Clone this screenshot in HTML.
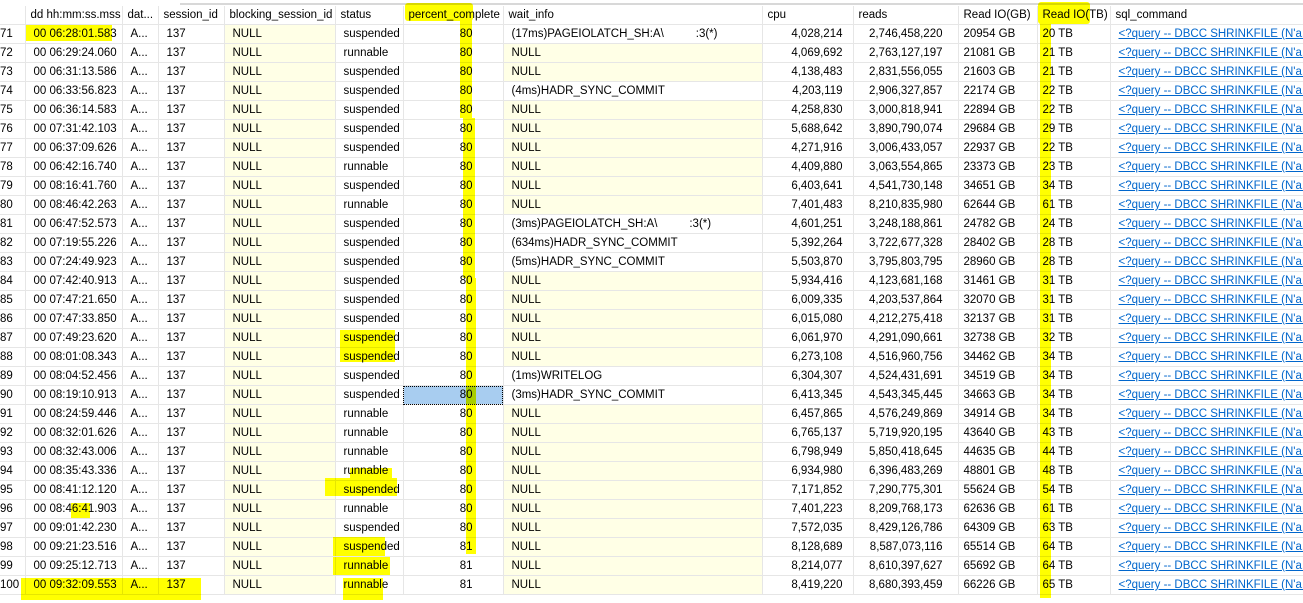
<!DOCTYPE html>
<html><head><meta charset="utf-8"><style>
body{margin:0;width:1303px;height:603px;overflow:hidden;background:#fff;font-family:"Liberation Sans",Arial,sans-serif;font-size:11.5px;color:#000;position:relative}
.top{position:absolute;left:180px;top:3px;width:1123px;height:2px;background:#d8d8d8}
table{position:absolute;left:0;top:6px;border-collapse:collapse;table-layout:fixed;width:1303px}
td{height:18px;padding:0 4px 0 8px;border-right:1px solid #e6e6e6;border-bottom:1px solid #e6e6e6;white-space:nowrap;overflow:hidden;line-height:18px}
tr.h td{padding-left:5px}
td.n{padding:0}
td.r{text-align:right;padding-right:10px}
td.p{padding-right:30px}
td.rd{padding-right:15px}
td.g{padding-left:5px}
td.y{background:#ffffe6}
td.l a{color:#0066cc;text-decoration:underline}
td.sel{background:#a8cdf0;outline:1px dotted #000;outline-offset:-1px}
.hl{position:absolute;background:#ffff00;mix-blend-mode:multiply}
</style></head><body>
<div class="top"></div>
<table>
<colgroup><col style="width:25px"><col style="width:97px"><col style="width:36px"><col style="width:66px"><col style="width:111px"><col style="width:68px"><col style="width:100px"><col style="width:259px"><col style="width:91px"><col style="width:105px"><col style="width:79px"><col style="width:73px"><col style="width:193px"></colgroup>
<tr class="h"><td class="n"></td><td>dd hh:mm:ss.mss</td><td>dat...</td><td>session_id</td><td>blocking_session_id</td><td>status</td><td>percent_complete</td><td>wait_info</td><td>cpu</td><td>reads</td><td>Read IO(GB)</td><td>Read IO(TB)</td><td>sql_command</td></tr>
<tr><td class="n">71</td><td>00 06:28:01.583</td><td>A...</td><td>137</td><td class="y">NULL</td><td>suspended</td><td class="r p">80</td><td>(17ms)PAGEIOLATCH_SH:A\&nbsp;&nbsp;&nbsp;&nbsp;&nbsp;&nbsp;&nbsp;&nbsp;&nbsp;&nbsp;:3(*)</td><td class="r">4,028,214</td><td class="r rd">2,746,458,220</td><td class="g">20954 GB</td><td class="g">20 TB</td><td class="l"><a>&lt;?query --  DBCC SHRINKFILE (N'a...</a></td></tr>
<tr><td class="n">72</td><td>00 06:29:24.060</td><td>A...</td><td>137</td><td class="y">NULL</td><td>runnable</td><td class="r p">80</td><td class="y">NULL</td><td class="r">4,069,692</td><td class="r rd">2,763,127,197</td><td class="g">21081 GB</td><td class="g">21 TB</td><td class="l"><a>&lt;?query --  DBCC SHRINKFILE (N'a...</a></td></tr>
<tr><td class="n">73</td><td>00 06:31:13.586</td><td>A...</td><td>137</td><td class="y">NULL</td><td>suspended</td><td class="r p">80</td><td class="y">NULL</td><td class="r">4,138,483</td><td class="r rd">2,831,556,055</td><td class="g">21603 GB</td><td class="g">21 TB</td><td class="l"><a>&lt;?query --  DBCC SHRINKFILE (N'a...</a></td></tr>
<tr><td class="n">74</td><td>00 06:33:56.823</td><td>A...</td><td>137</td><td class="y">NULL</td><td>suspended</td><td class="r p">80</td><td>(4ms)HADR_SYNC_COMMIT</td><td class="r">4,203,119</td><td class="r rd">2,906,327,857</td><td class="g">22174 GB</td><td class="g">22 TB</td><td class="l"><a>&lt;?query --  DBCC SHRINKFILE (N'a...</a></td></tr>
<tr><td class="n">75</td><td>00 06:36:14.583</td><td>A...</td><td>137</td><td class="y">NULL</td><td>suspended</td><td class="r p">80</td><td class="y">NULL</td><td class="r">4,258,830</td><td class="r rd">3,000,818,941</td><td class="g">22894 GB</td><td class="g">22 TB</td><td class="l"><a>&lt;?query --  DBCC SHRINKFILE (N'a...</a></td></tr>
<tr><td class="n">76</td><td>00 07:31:42.103</td><td>A...</td><td>137</td><td class="y">NULL</td><td>suspended</td><td class="r p">80</td><td class="y">NULL</td><td class="r">5,688,642</td><td class="r rd">3,890,790,074</td><td class="g">29684 GB</td><td class="g">29 TB</td><td class="l"><a>&lt;?query --  DBCC SHRINKFILE (N'a...</a></td></tr>
<tr><td class="n">77</td><td>00 06:37:09.626</td><td>A...</td><td>137</td><td class="y">NULL</td><td>suspended</td><td class="r p">80</td><td class="y">NULL</td><td class="r">4,271,916</td><td class="r rd">3,006,433,057</td><td class="g">22937 GB</td><td class="g">22 TB</td><td class="l"><a>&lt;?query --  DBCC SHRINKFILE (N'a...</a></td></tr>
<tr><td class="n">78</td><td>00 06:42:16.740</td><td>A...</td><td>137</td><td class="y">NULL</td><td>runnable</td><td class="r p">80</td><td class="y">NULL</td><td class="r">4,409,880</td><td class="r rd">3,063,554,865</td><td class="g">23373 GB</td><td class="g">23 TB</td><td class="l"><a>&lt;?query --  DBCC SHRINKFILE (N'a...</a></td></tr>
<tr><td class="n">79</td><td>00 08:16:41.760</td><td>A...</td><td>137</td><td class="y">NULL</td><td>suspended</td><td class="r p">80</td><td class="y">NULL</td><td class="r">6,403,641</td><td class="r rd">4,541,730,148</td><td class="g">34651 GB</td><td class="g">34 TB</td><td class="l"><a>&lt;?query --  DBCC SHRINKFILE (N'a...</a></td></tr>
<tr><td class="n">80</td><td>00 08:46:42.263</td><td>A...</td><td>137</td><td class="y">NULL</td><td>runnable</td><td class="r p">80</td><td class="y">NULL</td><td class="r">7,401,483</td><td class="r rd">8,210,835,980</td><td class="g">62644 GB</td><td class="g">61 TB</td><td class="l"><a>&lt;?query --  DBCC SHRINKFILE (N'a...</a></td></tr>
<tr><td class="n">81</td><td>00 06:47:52.573</td><td>A...</td><td>137</td><td class="y">NULL</td><td>suspended</td><td class="r p">80</td><td>(3ms)PAGEIOLATCH_SH:A\&nbsp;&nbsp;&nbsp;&nbsp;&nbsp;&nbsp;&nbsp;&nbsp;&nbsp;&nbsp;:3(*)</td><td class="r">4,601,251</td><td class="r rd">3,248,188,861</td><td class="g">24782 GB</td><td class="g">24 TB</td><td class="l"><a>&lt;?query --  DBCC SHRINKFILE (N'a...</a></td></tr>
<tr><td class="n">82</td><td>00 07:19:55.226</td><td>A...</td><td>137</td><td class="y">NULL</td><td>suspended</td><td class="r p">80</td><td>(634ms)HADR_SYNC_COMMIT</td><td class="r">5,392,264</td><td class="r rd">3,722,677,328</td><td class="g">28402 GB</td><td class="g">28 TB</td><td class="l"><a>&lt;?query --  DBCC SHRINKFILE (N'a...</a></td></tr>
<tr><td class="n">83</td><td>00 07:24:49.923</td><td>A...</td><td>137</td><td class="y">NULL</td><td>suspended</td><td class="r p">80</td><td>(5ms)HADR_SYNC_COMMIT</td><td class="r">5,503,870</td><td class="r rd">3,795,803,795</td><td class="g">28960 GB</td><td class="g">28 TB</td><td class="l"><a>&lt;?query --  DBCC SHRINKFILE (N'a...</a></td></tr>
<tr><td class="n">84</td><td>00 07:42:40.913</td><td>A...</td><td>137</td><td class="y">NULL</td><td>suspended</td><td class="r p">80</td><td class="y">NULL</td><td class="r">5,934,416</td><td class="r rd">4,123,681,168</td><td class="g">31461 GB</td><td class="g">31 TB</td><td class="l"><a>&lt;?query --  DBCC SHRINKFILE (N'a...</a></td></tr>
<tr><td class="n">85</td><td>00 07:47:21.650</td><td>A...</td><td>137</td><td class="y">NULL</td><td>suspended</td><td class="r p">80</td><td class="y">NULL</td><td class="r">6,009,335</td><td class="r rd">4,203,537,864</td><td class="g">32070 GB</td><td class="g">31 TB</td><td class="l"><a>&lt;?query --  DBCC SHRINKFILE (N'a...</a></td></tr>
<tr><td class="n">86</td><td>00 07:47:33.850</td><td>A...</td><td>137</td><td class="y">NULL</td><td>suspended</td><td class="r p">80</td><td class="y">NULL</td><td class="r">6,015,080</td><td class="r rd">4,212,275,418</td><td class="g">32137 GB</td><td class="g">31 TB</td><td class="l"><a>&lt;?query --  DBCC SHRINKFILE (N'a...</a></td></tr>
<tr><td class="n">87</td><td>00 07:49:23.620</td><td>A...</td><td>137</td><td class="y">NULL</td><td>suspended</td><td class="r p">80</td><td class="y">NULL</td><td class="r">6,061,970</td><td class="r rd">4,291,090,661</td><td class="g">32738 GB</td><td class="g">32 TB</td><td class="l"><a>&lt;?query --  DBCC SHRINKFILE (N'a...</a></td></tr>
<tr><td class="n">88</td><td>00 08:01:08.343</td><td>A...</td><td>137</td><td class="y">NULL</td><td>suspended</td><td class="r p">80</td><td class="y">NULL</td><td class="r">6,273,108</td><td class="r rd">4,516,960,756</td><td class="g">34462 GB</td><td class="g">34 TB</td><td class="l"><a>&lt;?query --  DBCC SHRINKFILE (N'a...</a></td></tr>
<tr><td class="n">89</td><td>00 08:04:52.456</td><td>A...</td><td>137</td><td class="y">NULL</td><td>suspended</td><td class="r p">80</td><td>(1ms)WRITELOG</td><td class="r">6,304,307</td><td class="r rd">4,524,431,691</td><td class="g">34519 GB</td><td class="g">34 TB</td><td class="l"><a>&lt;?query --  DBCC SHRINKFILE (N'a...</a></td></tr>
<tr><td class="n">90</td><td>00 08:19:10.913</td><td>A...</td><td>137</td><td class="y">NULL</td><td>suspended</td><td class="r p sel">80</td><td>(3ms)HADR_SYNC_COMMIT</td><td class="r">6,413,345</td><td class="r rd">4,543,345,445</td><td class="g">34663 GB</td><td class="g">34 TB</td><td class="l"><a>&lt;?query --  DBCC SHRINKFILE (N'a...</a></td></tr>
<tr><td class="n">91</td><td>00 08:24:59.446</td><td>A...</td><td>137</td><td class="y">NULL</td><td>runnable</td><td class="r p">80</td><td class="y">NULL</td><td class="r">6,457,865</td><td class="r rd">4,576,249,869</td><td class="g">34914 GB</td><td class="g">34 TB</td><td class="l"><a>&lt;?query --  DBCC SHRINKFILE (N'a...</a></td></tr>
<tr><td class="n">92</td><td>00 08:32:01.626</td><td>A...</td><td>137</td><td class="y">NULL</td><td>runnable</td><td class="r p">80</td><td class="y">NULL</td><td class="r">6,765,137</td><td class="r rd">5,719,920,195</td><td class="g">43640 GB</td><td class="g">43 TB</td><td class="l"><a>&lt;?query --  DBCC SHRINKFILE (N'a...</a></td></tr>
<tr><td class="n">93</td><td>00 08:32:43.006</td><td>A...</td><td>137</td><td class="y">NULL</td><td>runnable</td><td class="r p">80</td><td class="y">NULL</td><td class="r">6,798,949</td><td class="r rd">5,850,418,645</td><td class="g">44635 GB</td><td class="g">44 TB</td><td class="l"><a>&lt;?query --  DBCC SHRINKFILE (N'a...</a></td></tr>
<tr><td class="n">94</td><td>00 08:35:43.336</td><td>A...</td><td>137</td><td class="y">NULL</td><td>runnable</td><td class="r p">80</td><td class="y">NULL</td><td class="r">6,934,980</td><td class="r rd">6,396,483,269</td><td class="g">48801 GB</td><td class="g">48 TB</td><td class="l"><a>&lt;?query --  DBCC SHRINKFILE (N'a...</a></td></tr>
<tr><td class="n">95</td><td>00 08:41:12.120</td><td>A...</td><td>137</td><td class="y">NULL</td><td>suspended</td><td class="r p">80</td><td class="y">NULL</td><td class="r">7,171,852</td><td class="r rd">7,290,775,301</td><td class="g">55624 GB</td><td class="g">54 TB</td><td class="l"><a>&lt;?query --  DBCC SHRINKFILE (N'a...</a></td></tr>
<tr><td class="n">96</td><td>00 08:46:41.903</td><td>A...</td><td>137</td><td class="y">NULL</td><td>runnable</td><td class="r p">80</td><td class="y">NULL</td><td class="r">7,401,223</td><td class="r rd">8,209,768,173</td><td class="g">62636 GB</td><td class="g">61 TB</td><td class="l"><a>&lt;?query --  DBCC SHRINKFILE (N'a...</a></td></tr>
<tr><td class="n">97</td><td>00 09:01:42.230</td><td>A...</td><td>137</td><td class="y">NULL</td><td>suspended</td><td class="r p">80</td><td class="y">NULL</td><td class="r">7,572,035</td><td class="r rd">8,429,126,786</td><td class="g">64309 GB</td><td class="g">63 TB</td><td class="l"><a>&lt;?query --  DBCC SHRINKFILE (N'a...</a></td></tr>
<tr><td class="n">98</td><td>00 09:21:23.516</td><td>A...</td><td>137</td><td class="y">NULL</td><td>suspended</td><td class="r p">81</td><td class="y">NULL</td><td class="r">8,128,689</td><td class="r rd">8,587,073,116</td><td class="g">65514 GB</td><td class="g">64 TB</td><td class="l"><a>&lt;?query --  DBCC SHRINKFILE (N'a...</a></td></tr>
<tr><td class="n">99</td><td>00 09:25:12.713</td><td>A...</td><td>137</td><td class="y">NULL</td><td>runnable</td><td class="r p">81</td><td class="y">NULL</td><td class="r">8,214,077</td><td class="r rd">8,610,397,627</td><td class="g">65692 GB</td><td class="g">64 TB</td><td class="l"><a>&lt;?query --  DBCC SHRINKFILE (N'a...</a></td></tr>
<tr><td class="n">100</td><td>00 09:32:09.553</td><td>A...</td><td>137</td><td class="y">NULL</td><td>runnable</td><td class="r p">81</td><td class="y">NULL</td><td class="r">8,419,220</td><td class="r rd">8,680,393,459</td><td class="g">66226 GB</td><td class="g">65 TB</td><td class="l"><a>&lt;?query --  DBCC SHRINKFILE (N'a...</a></td></tr>
</table>
<div class="hl" style="left:26px;top:25px;width:86px;height:16px"></div>
<div class="hl" style="left:405px;top:3px;width:68px;height:18px;border-radius:3px"></div>
<div class="hl" style="left:460px;top:18px;width:12px;height:100px"></div>
<div class="hl" style="left:463px;top:118px;width:12px;height:160px"></div>
<div class="hl" style="left:466px;top:278px;width:10px;height:276px"></div>
<div class="hl" style="left:1038px;top:2px;width:52px;height:22px;border-radius:3px"></div>
<div class="hl" style="left:1040px;top:22px;width:11px;height:576px"></div>
<div class="hl" style="left:340px;top:330px;width:55px;height:32px"></div>
<div class="hl" style="left:350px;top:468px;width:42px;height:12px"></div>
<div class="hl" style="left:325px;top:478px;width:72px;height:18px"></div>
<div class="hl" style="left:71px;top:503px;width:19px;height:15px"></div>
<div class="hl" style="left:333px;top:537px;width:52px;height:19px"></div>
<div class="hl" style="left:333px;top:557px;width:57px;height:18px"></div>
<div class="hl" style="left:343px;top:578px;width:40px;height:22px"></div>
<div class="hl" style="left:21px;top:578px;width:180px;height:22px"></div>
</body></html>
